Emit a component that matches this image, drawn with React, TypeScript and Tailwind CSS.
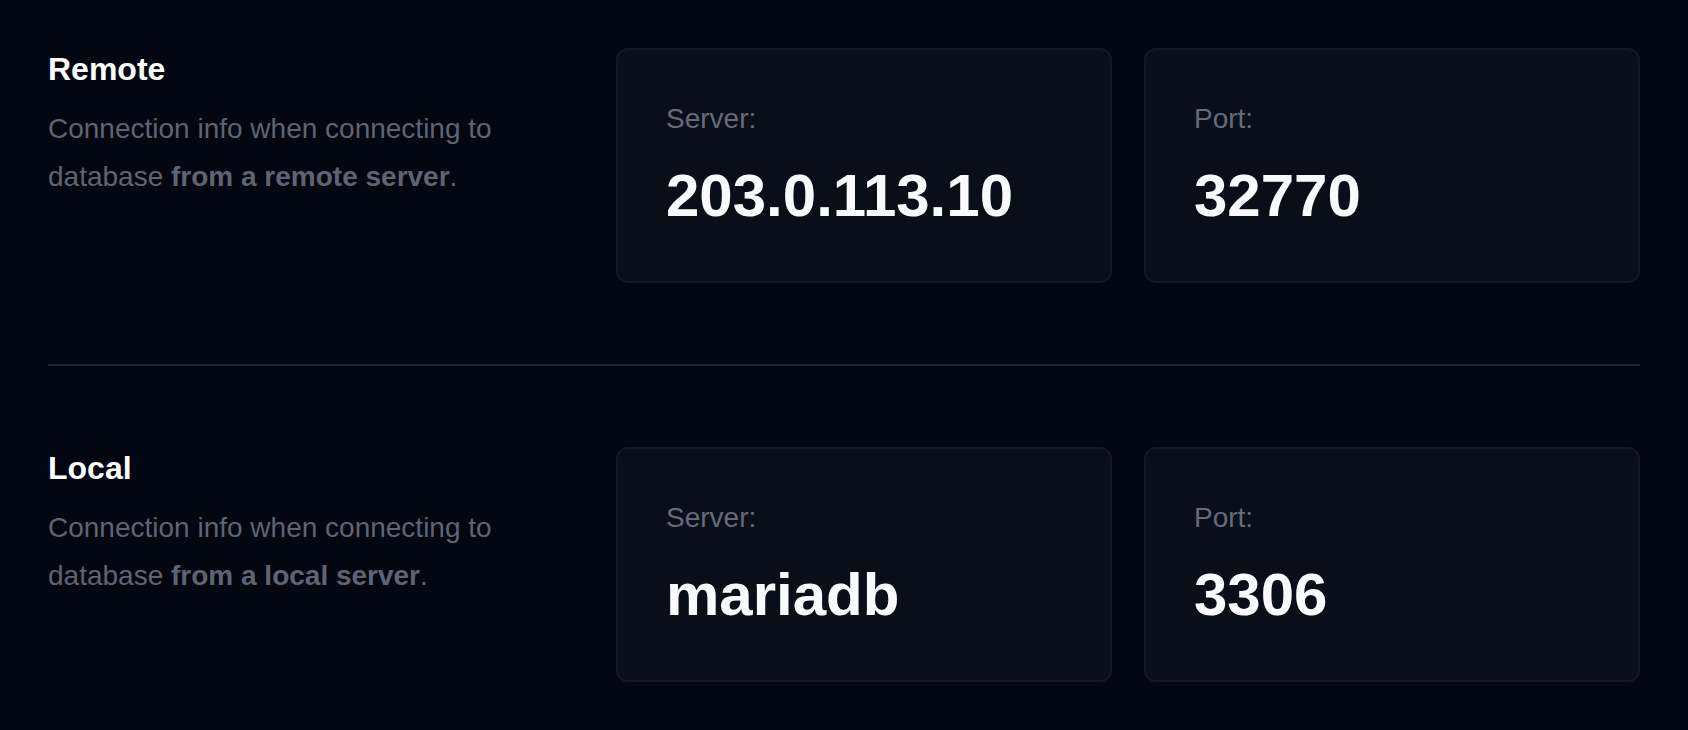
const sections = [
  {
    title: "Remote",
    where: "from a remote server",
    server: "203.0.113.10",
    port: "32770",
  },
  {
    title: "Local",
    where: "from a local server",
    server: "mariadb",
    port: "3306",
  },
];

function InfoCard({ label, value }: { label: string; value: string }) {
  return (
    <div className="rounded-[12px] border-2 border-[#131827] bg-[#0a0e19] px-[48px] pt-[48px] pb-[48px]">
      <div className="text-[28px] leading-[42px] text-[#646b7b]">{label}</div>
      <div className="mt-[18px] text-[60px] font-bold leading-[75px] text-[#f9fafb]">
        {value}
      </div>
    </div>
  );
}

export default function App() {
  return (
    <div
      className="min-h-[730px] bg-[#030712] px-[48px] py-[48px]"
      style={{ fontFamily: '"Liberation Sans", Arial, sans-serif' }}
    >
      {sections.map((s, i) => (
        <section
          key={s.title}
          className={`flex ${
            i > 0 ? "border-t-2 border-[#1c2231] pt-[81px]" : "pb-[81px]"
          }`}
        >
          <div className="w-[568px] shrink-0 pr-[48px]">
            <h2 className="text-[32px] font-bold leading-[42px] text-white">
              {s.title}
            </h2>
            <p className="mt-[15px] text-[28px] leading-[48px] text-[#5d6473]">
              Connection info when connecting to database{" "}
              <span className="font-bold">{s.where}</span>.
            </p>
          </div>
          <div className="grid flex-1 grid-cols-2 gap-[32px]">
            <InfoCard label="Server:" value={s.server} />
            <InfoCard label="Port:" value={s.port} />
          </div>
        </section>
      ))}
    </div>
  );
}
